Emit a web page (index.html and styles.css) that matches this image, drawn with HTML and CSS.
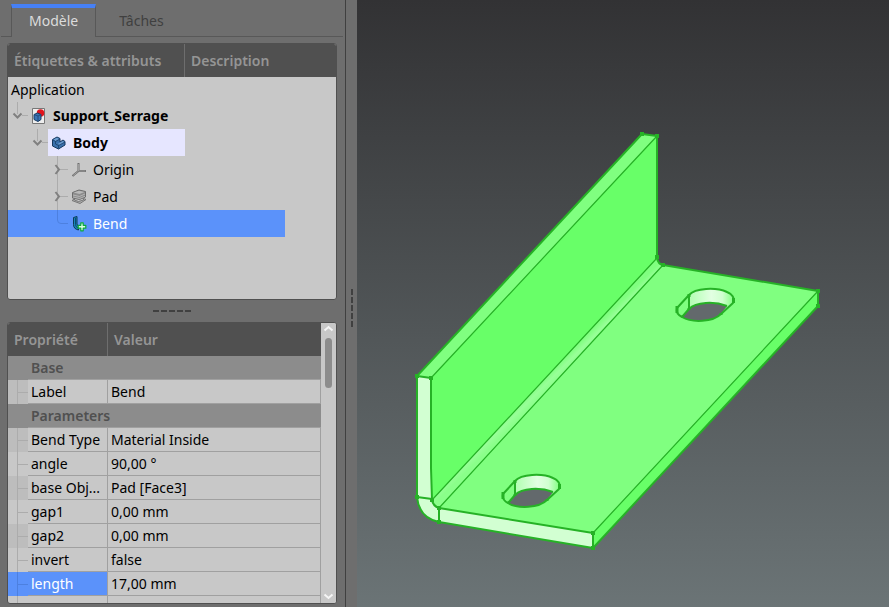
FILE: index.html
```html
<!DOCTYPE html>
<html lang="fr">
<head>
<meta charset="utf-8">
<title>Support_Serrage</title>
<link rel="stylesheet" href="styles.css">
</head>
<body>
<div class="app">
  <aside class="sidebar">
    <nav class="tabs" role="tablist">
      <button class="tab tab-active" role="tab" aria-selected="true" type="button">Modèle</button>
      <button class="tab" role="tab" aria-selected="false" type="button">Tâches</button>
    </nav>

    <section class="panel tree-panel">
      <div class="tree-head">
        <span>Étiquettes &amp; attributs</span>
        <span>Description</span>
      </div>
      <ul class="tree" role="tree">
        <li class="row root" role="treeitem">Application</li>
        <li class="row level-1" role="treeitem" aria-expanded="true">
          <svg class="branch" viewBox="0 0 20 27"><path class="guide" d="M9.500 0V12M14 13.500H20"/><path class="chevron" d="M5.500 11.500L9.500 15.500L13.500 11.500"/></svg>
          <span class="item"><svg class="icon" viewBox="0 0 16 16"><path fill="#eee" stroke="#777" d="M1.500.500H13.500V15.500H1.500Z"/><circle cx="9.500" cy="5" r="3.800" fill="#e0141c"/><path fill="#3d75b5" stroke="#173a62" d="M3 6.500L6.500 5L10 6.500V11.500L7 13.500L3 11.500Z"/><path fill="none" stroke="#234d7d" d="M3 6.500L7 8L10 6.500M7 8V13"/></svg><b>Support_Serrage</b></span>
        </li>
        <li class="row level-2" role="treeitem" aria-expanded="true">
          <svg class="branch" viewBox="0 0 20 27"><path class="guide" d="M9.500 0V12M14 13.500H20"/><path class="chevron" d="M5.500 11.500L9.500 15.500L13.500 11.500"/></svg>
          <span class="item active-body"><svg class="icon" viewBox="0 0 16 16"><path fill="#3a70ac" stroke="#16395f" d="M1.500 4.500L6 2L9 3.500V7L12 5L14 6.500V10L7.500 14L1.500 11Z"/><path fill="#6f9fd0" d="M2.500 4.500L6 2.800L8 4L4.500 6ZM7 8.800L12 6L13.300 7L8.500 10Z"/><path fill="none" stroke="#16395f" stroke-width=".7" d="M2 5L4.500 6.500V9L7.500 10.500V13.500M7.500 10.500L14 7M4.500 6.500L9 4"/></svg><b>Body</b></span>
        </li>
        <li class="row level-3" role="treeitem" aria-expanded="false">
          <svg class="branch" viewBox="0 0 20 27"><path class="guide" d="M9.500 0V27M12 13.500H20"/><path class="chevron" d="M7.500 9L11 13.500L7.500 18"/></svg>
          <span class="item"><svg class="icon" viewBox="0 0 16 16"><path fill="none" stroke="#6d6d6d" stroke-width="2" d="M7.500 1V9L1.500 14M7.500 9H15"/><path fill="none" stroke="#aaa" stroke-width=".8" d="M7.500 2V9H14.500M7 9.500L2 13.500"/></svg><span>Origin</span></span>
        </li>
        <li class="row level-3" role="treeitem" aria-expanded="false">
          <svg class="branch" viewBox="0 0 20 27"><path class="guide" d="M9.500 0V27M12 13.500H20"/><path class="chevron" d="M7.500 9L11 13.500L7.500 18"/></svg>
          <span class="item"><svg class="icon" viewBox="0 0 16 16"><path fill="#b0b0b0" stroke="#777" d="M1 11.500L3.500 10V11L7.500 12.500L12.500 11V9.500L15 10.500L9 14.500Z"/><path fill="#8c8c8c" stroke="#6d6d6d" d="M1.500 3.500L8 1L14.500 2.500V8L8.500 10.500L1.500 9Z"/><path fill="#b9b9b9" d="M2.500 3.600L8 1.800L13.500 2.900L8.500 5Z"/><path fill="none" stroke="#c0c0c0" stroke-width=".8" d="M2 6L8.500 7.500L14 5M2 8L8.500 9.500L14 7.300"/></svg><span>Pad</span></span>
        </li>
        <li class="row level-3 selected" role="treeitem" aria-selected="true">
          <svg class="branch" viewBox="0 0 20 27"><path class="guide" d="M9.500 0V10Q9.500 13.500 13 13.500H20"/></svg>
          <span class="item"><svg class="icon" viewBox="0 0 16 16"><path fill="#1785bd" stroke="#0c3b57" d="M2.500 1.500L6 .500V8Q6 9.500 7.500 10V14Q2.500 13 2.500 8.500Z"/><path fill="none" stroke="#0c4b70" d="M4.500 2V8.500Q4.500 11 7 12"/><path fill="#d8ffe0" stroke="#0aa83c" stroke-linejoin="round" stroke-width="1.200" d="M9.800 6.800H12.200V9.300H14.800V12.200H12.200V14.800H9.800V12.200H7.200V9.300H9.800Z"/></svg><span>Bend</span></span>
        </li>
      </ul>
    </section>

    <div class="split-h"><i></i><i></i><i></i><i></i><i></i></div>

    <section class="panel props-panel">
      <table class="props">
        <colgroup><col class="col-twig"><col class="col-name"><col></colgroup>
        <thead><tr><th colspan="2" scope="col">Propriété</th><th scope="col">Valeur</th></tr></thead>
        <tbody>
          <tr class="group"><td></td><th colspan="2" scope="rowgroup">Base</th></tr>
          <tr class="shade"><td class="twig"></td><th scope="row">Label</th><td>Bend</td></tr>
          <tr class="group"><td></td><th colspan="2" scope="rowgroup">Parameters</th></tr>
          <tr class="shade"><td class="twig"></td><th scope="row">Bend Type</th><td>Material Inside</td></tr>
          <tr><td class="twig"></td><th scope="row">angle</th><td>90,00 °</td></tr>
          <tr class="shade"><td class="twig"></td><th scope="row">base Obj...</th><td>Pad [Face3]</td></tr>
          <tr><td class="twig"></td><th scope="row">gap1</th><td>0,00 mm</td></tr>
          <tr class="shade"><td class="twig"></td><th scope="row">gap2</th><td>0,00 mm</td></tr>
          <tr><td class="twig"></td><th scope="row">invert</th><td>false</td></tr>
          <tr class="current"><td class="twig"></td><th scope="row">length</th><td>17,00 mm</td></tr>
          <tr><td class="twig"></td><th scope="row"></th><td></td></tr>
        </tbody>
      </table>
      <div class="scrollbar">
        <svg class="arrow" viewBox="0 0 15 12"><path d="M3.500 7.500L7.500 4L11.500 7.500"/></svg>
        <div class="track"><div class="thumb"></div></div>
        <svg class="arrow" viewBox="0 0 15 12"><path d="M3.500 3.500L7.500 7L11.500 3.500"/></svg>
      </div>
    </section>
  </aside>

  <div class="split-v"><i></i><i></i><i></i><i></i><i></i></div>

  <main class="viewport">
    <svg class="model" viewBox="357 0 532 607" role="img" aria-label="Support_Serrage">
      <defs>
        <linearGradient id="bore" x1="0" x2="1"><stop offset="0" stop-color="#b0ffb0"/><stop offset=".5" stop-color="#e2ffe2"/><stop offset=".75" stop-color="#d0ffd0"/><stop offset="1" stop-color="#80ff80"/></linearGradient>
        <linearGradient id="fold" gradientUnits="userSpaceOnUse" x1="544" y1="378" x2="552" y2="386"><stop offset="0" stop-color="#80ff80"/><stop offset=".5" stop-color="#98ff98"/><stop offset="1" stop-color="#8aff8a"/></linearGradient>
        <g id="slot">
          <path fill="url(#bore)" d="M515 481C521 474 542 473 553 478C558 480 561 484 559 489L553 493C539 488 524 488 515 495Z"/>
          <path fill="#80ff80" d="M503 494L515 481V495L508 503L503 500Z"/>
          <path class="void" d="M508 503L515 495C522 488 540 487 553 492L547 500C539 508 518 509 508 503Z"/>
          <path class="edge" d="M503 494L515 481C521 474 542 473 553 478C558 480 561 484 559 489L547 500C539 508 518 509 508 503C504 501 502 498 503 494M515 481V495C522 488 540 487 553 492M515 495L508 503"/>
          <path class="node" d="M503 492V499M515 480V483M559.500 484V489M515 494V496M547 499V501"/>
        </g>
      </defs>
      <path class="face-wall" d="M431 378L657 136V258L432 500Z"/>
      <path class="face-top" d="M417 376L642 134L657 136L431 378Z"/>
      <path class="face-top" d="M439 508L663 265L818 291L593 533Z"/>
      <path fill="url(#fold)" d="M432 500L657 258Q658 264 663 265L439 508Q433 506 432 500Z"/>
      <path class="face-wall" d="M593 533L818 291V306L593 548Z"/>
      <path class="face-cut" d="M417 376L431 378V468L432 500Q433 506 439 508L593 533V548L439 522Q419 518 417 497Z"/>
      <path class="edge thin" d="M431 378L657 136M432 500L657 258M439 508L663 265M593 533L818 291"/>
      <path class="edge" d="M417 376L642 134L657 136V258Q658 264 663 265L818 291V306L593 548L439 522Q419 518 417 497Z"/>
      <path class="edge" d="M417 376L431 378V468L432 500Q433 506 439 508L593 533V548M417 497L432 499M439 508V522"/>
      <path class="node" d="M415 376H419M429 378H433M640 134H644M655 136H659M655 257H659M661 265H665M816 291H820M816 306H820M591 533H595M591 548H595M415 497H419M430 500H434M437 508H441M437 522H441"/>
      <use href="#slot"/>
      <use href="#slot" x="174" y="-186"/>
    </svg>
  </main>
</div>
</body>
</html>
```
FILE: styles.css
```css
* { box-sizing: border-box; }

body {
  margin: 0;
  font: 14px/20px "Noto Sans", sans-serif;
  color: #000;
  background: #6e6e6e;
}

.app {
  display: flex;
  height: 100vh;
  overflow: hidden;
}

.sidebar {
  flex: 0 0 345px;
  display: flex;
  flex-direction: column;
  padding: 4px 8px 3px 7px;
}

.tabs {
  display: flex;
  flex: 0 0 33px;
  margin: 0 -6px 6px;
  padding-left: 10px;
  background: linear-gradient(#585858, #585858) left bottom / 100% 1px no-repeat;
}

.tab {
  padding: 0 23px;
  border: 0;
  background: none;
  color: #404040;
  font: inherit;
}

.tab-active {
  padding: 0 17px 4px;
  border: 1px solid #585858;
  border-width: 0 1px;
  border-top: 4px solid #4680f5;
  background: #6e6e6e;
  color: #dcdcdc;
}

.panel {
  border: 1px solid #505050;
  border-radius: 3px;
  background: #c8c8c8;
  overflow: hidden;
}

.tree-panel { flex: 0 0 257px; }

.tree-head {
  display: grid;
  grid-template-columns: 177px 1fr;
  height: 33px;
  background: #505050;
  color: #959595;
  font-weight: 600;
  line-height: 33px;
}

.tree-head span { padding-left: 6px; }
.tree-head span:first-child { border-right: 1px solid #6e6e6e; }

.tree {
  margin: 0;
  padding: 0;
  list-style: none;
}

.row {
  display: flex;
  width: 277px;
  height: 27px;
  line-height: 27px;
}

.root {
  height: 25px;
  padding-left: 3px;
  line-height: 25px;
}

.level-2 { padding-left: 20px; }
.level-3 { padding-left: 40px; }

.branch {
  flex: none;
  width: 20px;
  height: 27px;
}

.guide { fill: none; stroke: #acacac; }
.chevron { fill: none; stroke: #808080; stroke-width: 2; }

.item {
  display: flex;
  align-items: center;
  gap: 6px;
  padding-left: 3px;
}

.icon { width: 16px; height: 16px; }

.active-body {
  width: 137px;
  background: #e6e6ff;
}

.selected {
  background: #5b92fa;
  color: #fff;
}

.selected .guide { stroke: #4d80df; }

.split-h {
  display: flex;
  flex: 0 0 22px;
  align-items: center;
  justify-content: center;
  gap: 2px;
}

.split-h i {
  width: 6px;
  height: 2px;
  background: #404040;
}

.props-panel {
  display: flex;
  flex: 1 1 0;
  min-height: 0;
}

.props {
  flex: 1;
  table-layout: fixed;
  border-collapse: separate;
  border-spacing: 0;
  width: 100%;
  height: max-content;
}

.col-twig { width: 20px; }
.col-name { width: 80px; }

.props th,
.props td {
  height: 24px;
  padding: 1px 3px 0;
  border-right: 1px solid #a0a0a0;
  border-bottom: 1px solid #a0a0a0;
  font-weight: 400;
  line-height: 22px;
  text-align: left;
  white-space: nowrap;
}

.props thead th {
  height: 33px;
  padding: 0 6px;
  border-right: 1px solid #6e6e6e;
  border-bottom: 0;
  background: #505050;
  color: #959595;
  font-weight: 600;
}

.props thead th:last-child { border-right: 0; }

.props .group th,
.props .group td {
  border-right: 0;
  background: #8c8c8c;
  color: #505050;
  font-weight: 600;
}

.props .group td { border-bottom: 0; }

.props td:first-child { padding: 0; }

.props .twig {
  border: 0;
  background:
    linear-gradient(#acacac, #acacac) 9px 0 / 1px 100% no-repeat,
    linear-gradient(#acacac, #acacac) 10px 12px / 10px 1px no-repeat;
}

.props .shade .twig { background-color: #bdbdbd; }

.props .current th {
  background: #5b92fa;
  color: #fff;
}

.props .current .twig {
  background:
    linear-gradient(#4d80df, #4d80df) 9px 0 / 1px 100% no-repeat,
    linear-gradient(#4d80df, #4d80df) 10px 12px / 10px 1px no-repeat,
    #5b92fa;
}

.scrollbar {
  display: flex;
  flex: 0 0 15px;
  flex-direction: column;
  background: #c8c8c8;
}

.arrow {
  flex: none;
  width: 15px;
  height: 12px;
  fill: none;
  stroke: #f5f5f5;
  stroke-width: 2;
}

.track {
  flex: 1;
  padding: 3px 4px;
}

.thumb {
  height: 50px;
  border-radius: 4px;
  background: #8c8c8c;
}

.split-v {
  display: flex;
  flex: 0 0 12px;
  flex-direction: column;
  align-items: center;
  justify-content: center;
  gap: 2px;
  padding-top: 8px;
  border-left: 1px solid #404040;
}

.split-v i {
  width: 2px;
  height: 6px;
  background: #404040;
}

.viewport {
  flex: 1;
  min-width: 0;
  background: linear-gradient(#323234, #6b7476);
}

.model {
  display: block;
  width: 100%;
  height: 100%;
}

.face-wall { fill: #68ff68; }
.face-top { fill: #80ff80; }
.face-cut { fill: #d2ffd2; }
.void { fill: #63696c; }

.edge {
  fill: none;
  stroke: #26b226;
  stroke-width: 2;
  stroke-linejoin: round;
}

.edge.thin { stroke-width: 1.2; }

.node {
  fill: none;
  stroke: #26b226;
  stroke-width: 4;
}

#slot .node { stroke-width: 3; }
```
